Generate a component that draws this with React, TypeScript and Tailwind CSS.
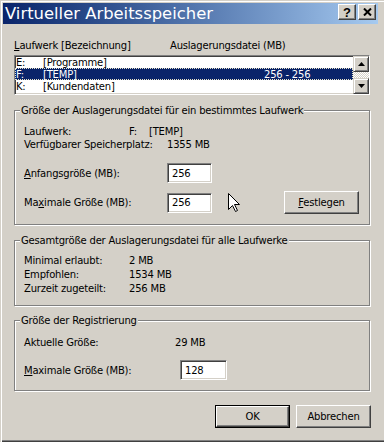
const raised =
  'border border-white border-r-[#404040] border-b-[#404040] shadow-[inset_-1px_-1px_0_#808080]';
const sunken =
  'border border-[#808080] border-r-white border-b-white shadow-[inset_1px_1px_0_#404040,inset_-1px_-1px_0_#d4d0c8] bg-white';
const scrollBtn =
  'border border-[#d4d0c8] border-r-[#404040] border-b-[#404040] shadow-[inset_1px_1px_0_white,inset_-1px_-1px_0_#808080] bg-[#d4d0c8] flex items-center justify-center';

function Group({ title, h, className, children }: { title: string; h: string; className?: string; children: React.ReactNode }) {
  return (
    <div className={`relative border border-[#808080] shadow-[inset_1px_1px_0_white,1px_1px_0_white] ${h} ${className ?? ''}`}>
      <span className="absolute top-[-7px] left-[5px] px-[1px] bg-[#d4d0c8] leading-[13px] whitespace-nowrap">{title}</span>
      {children}
    </div>
  );
}

function Field({ value, w }: { value: string; w: string }) {
  return (
    <div className={`${sunken} ${w} h-[20px] pl-[4px] flex items-center leading-[13px]`}>{value}</div>
  );
}

function Arrow({ up }: { up?: boolean }) {
  return (
    <svg width="7" height="4" viewBox="0 0 7 4">
      <path d={up ? 'M3.5 0 L7 4 L0 4 Z' : 'M0 0 L7 0 L3.5 4 Z'} fill="black" />
    </svg>
  );
}

const drives = [
  { d: 'E:', n: '[Programme]', s: '' },
  { d: 'F:', n: '[TEMP]', s: '256 - 256', sel: true },
  { d: 'K:', n: '[Kundendaten]', s: '' },
];

export default function App() {
  return (
    <div className="relative w-[384px] h-[442px] bg-[#d4d0c8] pt-[3px] pl-[3px] pr-[6px] text-black text-[10px] tracking-[-0.2px] font-['DejaVu_Sans',Verdana,sans-serif] shadow-[inset_1px_1px_0_#d4d0c8,inset_2px_2px_0_white,inset_0_-1px_0_#404040,inset_0_-2px_0_#808080] overflow-hidden">
      {/* title bar */}
      <div className="h-[21px] flex items-start pt-[1px] bg-gradient-to-r from-[#0a246a] to-[#a6caf0]">
        <span className="pl-[2px] text-white text-[16.4px] leading-[19px] tracking-normal">Virtueller Arbeitsspeicher</span>
        <div className="ml-auto mr-[2px] flex gap-[2px]">
          <div className={`${raised} bg-[#d4d0c8] w-[18px] h-[16px] flex items-center justify-center font-['Liberation_Sans',Arial,sans-serif] font-bold text-[13px] leading-none tracking-normal`}>?</div>
          <div className={`${raised} bg-[#d4d0c8] w-[18px] h-[16px] flex items-center justify-center`}>
            <svg width="9" height="8" viewBox="0 0 9 8">
              <path d="M1 0.5 L8 7.5 M8 0.5 L1 7.5" stroke="black" strokeWidth="2" />
            </svg>
          </div>
        </div>
      </div>

      <div className="ml-[11px] w-[356px]">
        {/* list header */}
        <div className="mt-[15px] h-[13px] leading-[13px] flex">
          <span className="w-[156px]"><span className="underline">L</span>aufwerk [Bezeichnung]</span>
          <span>Auslagerungsdatei (MB)</span>
        </div>

        {/* list */}
        <div className={`${sunken} mt-[3px] h-[40px] flex`}>
          <div className="flex-1 flex flex-col">
            {drives.map((r) => (
              <div
                key={r.d}
                className={`h-[12px] leading-[12px] flex ${r.sel ? 'bg-[#0a246a] text-white border border-dotted border-[#e8e4c8]' : 'border border-transparent'}`}
              >
                <span className="w-[27px]">{r.d}</span>
                <span className="w-[221px]">{r.n}</span>
                <span>{r.s}</span>
              </div>
            ))}
          </div>
          <div className="w-[16px] flex flex-col">
            <div className={`${scrollBtn} h-[16px]`}><Arrow up /></div>
            <div className="flex-1 bg-[repeating-conic-gradient(#ffffff_0_25%,#d4d0c8_0_50%)] bg-[length:2px_2px]" />
            <div className={`${scrollBtn} h-[16px]`}><Arrow /></div>
          </div>
        </div>

        {/* group 1 */}
        <Group title="Größe der Auslagerungsdatei für ein bestimmtes Laufwerk" h="h-[115px]" className="mt-[15px] pl-[9px] pt-[14px]">
          <div className="flex leading-[13px]">
            <span className="w-[105px]">Laufwerk:</span>
            <span className="w-[20px]">F:</span>
            <span>[TEMP]</span>
          </div>
          <div className="flex leading-[13px]">
            <span className="w-[143px]">Verfügbarer Speicherplatz:</span>
            <span>1355 MB</span>
          </div>
          <div className="mt-[12px] h-[20px] flex items-center">
            <span className="w-[143px]"><span className="underline">A</span>nfangsgröße (MB):</span>
            <Field value="256" w="w-[45px]" />
          </div>
          <div className="mt-[8px] h-[23px] flex items-center">
            <span className="w-[143px]">Ma<span className="underline">x</span>imale Größe (MB):</span>
            <Field value="256" w="w-[45px]" />
            <div className={`${raised} ml-auto mr-[10px] w-[75px] h-[23px] flex items-center justify-center`}>
              <span><span className="underline">F</span>estlegen</span>
            </div>
          </div>
        </Group>

        {/* group 2 */}
        <Group title="Gesamtgröße der Auslagerungsdatei für alle Laufwerke" h="h-[66px]" className="mt-[15px] pl-[9px] pt-[13px]">
          {[
            ['Minimal erlaubt:', '2 MB'],
            ['Empfohlen:', '1534 MB'],
            ['Zurzeit zugeteilt:', '256 MB'],
          ].map(([a, b]) => (
            <div key={a} className="flex leading-[14px]">
              <span className="w-[105px]">{a}</span>
              <span>{b}</span>
            </div>
          ))}
        </Group>

        {/* group 3 */}
        <Group title="Größe der Registrierung" h="h-[71px]" className="mt-[14px] pl-[9px] pt-[15px]">
          <div className="flex leading-[13px]">
            <span className="w-[151px]">Aktuelle Größe:</span>
            <span>29 MB</span>
          </div>
          <div className="mt-[11px] h-[20px] flex items-center">
            <span className="w-[156px]"><span className="underline">M</span>aximale Größe (MB):</span>
            <Field value="128" w="w-[47px]" />
          </div>
        </Group>

        {/* dialog buttons */}
        <div className="mt-[14px] flex justify-end gap-[6px] mr-[-1px]">
          <div className="border border-black">
            <div className={`${raised} w-[73px] h-[21px] flex items-center justify-center`}>OK</div>
          </div>
          <div className={`${raised} w-[75px] h-[23px] flex items-center justify-center`}>Abbrechen</div>
        </div>
      </div>

      {/* mouse pointer */}
      <svg className="absolute left-[228px] top-[193px]" width="13" height="20" viewBox="0 0 13 20">
        <path d="M0.5 0.5 L0.5 16.5 L4.5 12.5 L7.5 18.5 L9.5 17.5 L6.5 11.5 L11.5 11.5 Z" fill="white" stroke="black" strokeWidth="1" />
      </svg>
    </div>
  );
}
